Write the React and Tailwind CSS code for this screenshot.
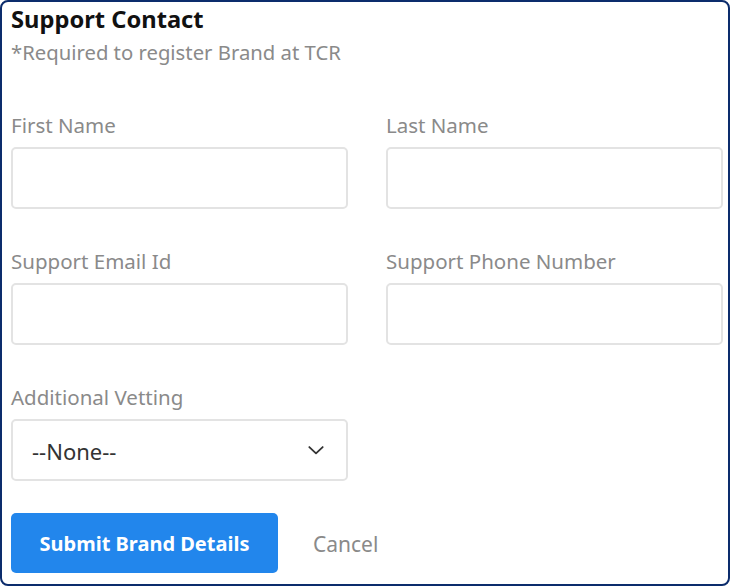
import React from 'react';

const font = { fontFamily: '"Noto Sans", "Open Sans", sans-serif' };

const Field = ({ label, children }) => (
  <div className="flex flex-col">
    <label className="h-[26px] flex items-center text-[20.5px] text-[#8a8a8a] whitespace-nowrap">{label}</label>
    <div className="mt-[9px]">{children}</div>
  </div>
);

const Input = () => (
  <input className="w-[337px] h-[62px] border-2 border-[#e3e3e3] rounded-[5px] bg-white outline-none px-3" />
);

export default function App() {
  return (
    <div
      style={font}
      className="w-[730px] h-[586px] bg-white border-2 border-[#0c2c6c] rounded-[8px] pl-[9px] pr-[5px]"
    >
      {/* Header */}
      <h2 className="h-[36px] flex items-center text-[23.7px] font-bold text-[#111]">Support Contact</h2>
      <p className="h-[28px] flex items-center text-[20.3px] text-[#8a8a8a]">*Required to register Brand at TCR</p>

      {/* Form grid */}
      <div className="mt-[46px] grid grid-cols-[337px_337px] gap-x-[38px] gap-y-[39px]">
        <Field label="First Name"><Input /></Field>
        <Field label="Last Name"><Input /></Field>
        <Field label="Support Email Id"><Input /></Field>
        <Field label="Support Phone Number"><Input /></Field>
        <Field label="Additional Vetting">
          <div className="w-[337px] h-[62px] border-2 border-[#e3e3e3] rounded-[5px] bg-white flex items-center justify-between pl-[19px] pr-[20px]">
            <span className="text-[22px] text-[#333] pt-[2px]">--None--</span>
            <svg width="20" height="20" viewBox="0 0 24 24" fill="none" stroke="#333" strokeWidth="2.2" strokeLinecap="round" strokeLinejoin="round">
              <path d="M4 8.5l8 7.5 8-7.5" />
            </svg>
          </div>
        </Field>
      </div>

      {/* Actions */}
      <div className="mt-[32px] flex items-center gap-[35px]">
        <button className="w-[267px] h-[60px] rounded-[5px] bg-[#2286ec] text-white text-[20px] font-bold pt-[2px]">
          Submit Brand Details
        </button>
        <button className="text-[21px] text-[#8a8a8a] pt-[3px]">Cancel</button>
      </div>
    </div>
  );
}
